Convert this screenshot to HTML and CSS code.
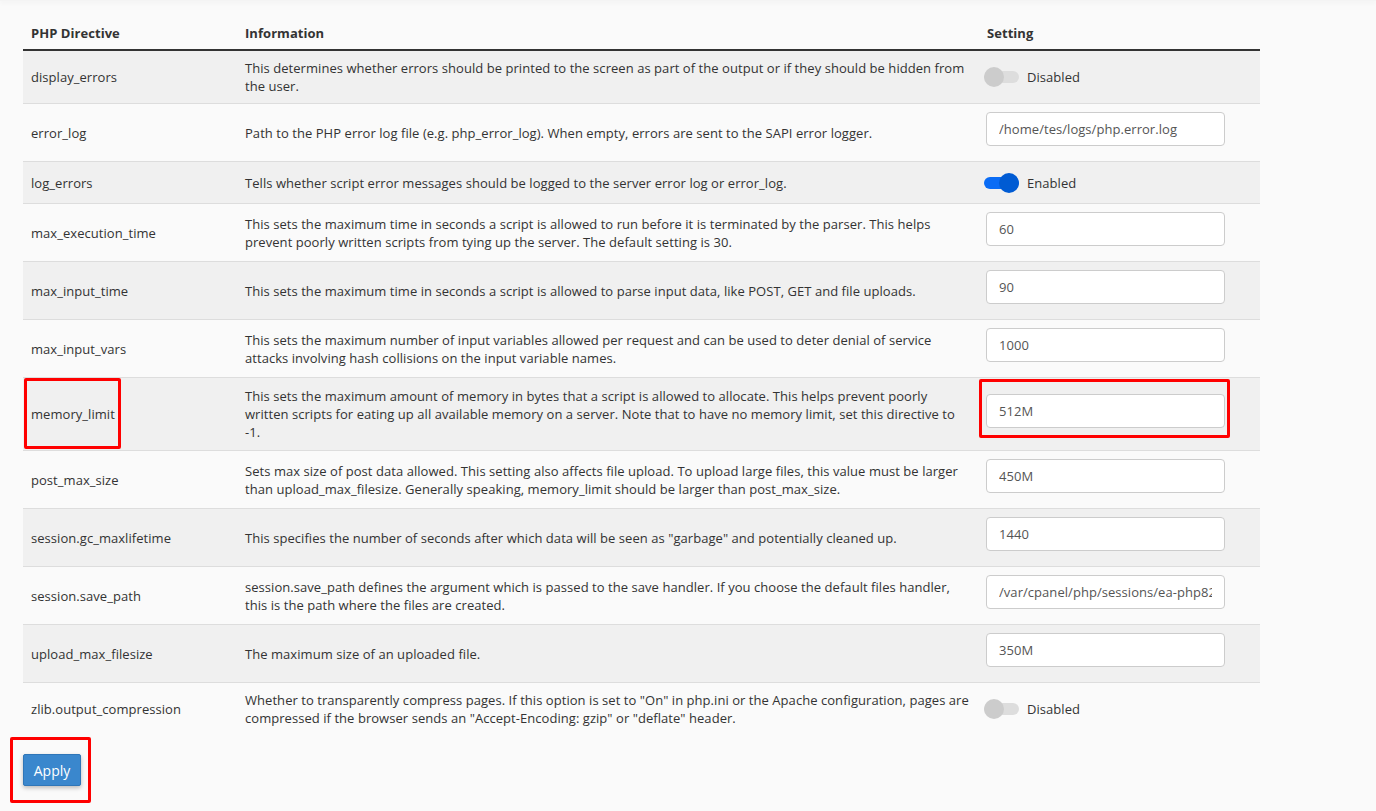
FILE: index.html
```html
<!DOCTYPE html>
<html>
<head>
<meta charset="UTF-8">
<title>MultiPHP INI Editor</title>
<link rel="stylesheet" href="styles.css">
</head>
<body>
<div class="top_shadow"></div>

<div class="editor">
    <table class="directives">
        <colgroup>
            <col class="col_name">
            <col class="col_info">
            <col class="col_setting">
        </colgroup>
        <thead>
            <tr>
                <th>PHP Directive</th>
                <th>Information</th>
                <th>Setting</th>
            </tr>
        </thead>
        <tbody>
            <tr>
                <td>display_errors</td>
                <td>This determines whether errors should be printed to the screen as part of the output or if they should be hidden from the user.</td>
                <td><span class="toggle"><span class="switch"></span><span class="label">Disabled</span></span></td>
            </tr>
            <tr>
                <td>error_log</td>
                <td>Path to the PHP error log file (e.g. php_error_log). When empty, errors are sent to the SAPI error logger.</td>
                <td><div class="field"><input type="text" value="/home/tes/logs/php.error.log"></div></td>
            </tr>
            <tr>
                <td>log_errors</td>
                <td>Tells whether script error messages should be logged to the server error log or error_log.</td>
                <td><span class="toggle on"><span class="switch"></span><span class="label">Enabled</span></span></td>
            </tr>
            <tr>
                <td>max_execution_time</td>
                <td>This sets the maximum time in seconds a script is allowed to run before it is terminated by the parser. This helps prevent poorly written scripts from tying up the server. The default setting is 30.</td>
                <td><div class="field"><input type="text" value="60"></div></td>
            </tr>
            <tr>
                <td>max_input_time</td>
                <td>This sets the maximum time in seconds a script is allowed to parse input data, like POST, GET and file uploads.</td>
                <td><div class="field"><input type="text" value="90"></div></td>
            </tr>
            <tr>
                <td>max_input_vars</td>
                <td>This sets the maximum number of input variables allowed per request and can be used to deter denial of service attacks involving hash collisions on the input variable names.</td>
                <td><div class="field"><input type="text" value="1000"></div></td>
            </tr>
            <tr class="tall">
                <td>memory_limit<span class="mark mark_name"></span></td>
                <td>This sets the maximum amount of memory in bytes that a script is allowed to allocate. This helps prevent poorly written scripts for eating up all available memory on a server. Note that to have no memory limit, set this directive to -1.</td>
                <td><div class="field"><input type="text" value="512M"><span class="mark mark_field"></span></div></td>
            </tr>
            <tr>
                <td>post_max_size</td>
                <td>Sets max size of post data allowed. This setting also affects file upload. To upload large files, this value must be larger than upload_max_filesize. Generally speaking, memory_limit should be larger than post_max_size.</td>
                <td><div class="field"><input type="text" value="450M"></div></td>
            </tr>
            <tr>
                <td>session.gc_maxlifetime</td>
                <td>This specifies the number of seconds after which data will be seen as "garbage" and potentially cleaned up.</td>
                <td><div class="field"><input type="text" value="1440"></div></td>
            </tr>
            <tr>
                <td>session.save_path</td>
                <td>session.save_path defines the argument which is passed to the save handler. If you choose the default files handler, this is the path where the files are created.</td>
                <td><div class="field"><input type="text" value="/var/cpanel/php/sessions/ea-php82"></div></td>
            </tr>
            <tr>
                <td>upload_max_filesize</td>
                <td>The maximum size of an uploaded file.</td>
                <td><div class="field"><input type="text" value="350M"></div></td>
            </tr>
            <tr>
                <td>zlib.output_compression</td>
                <td>Whether to transparently compress pages. If this option is set to "On" in php.ini or the Apache configuration, pages are compressed if the browser sends an "Accept-Encoding: gzip" or "deflate" header.</td>
                <td><span class="toggle"><span class="switch"></span><span class="label">Disabled</span></span></td>
            </tr>
        </tbody>
    </table>

    <div class="actions">
        <button class="apply">Apply</button>
        <span class="mark mark_apply"></span>
    </div>
</div>
</body>
</html>
```

FILE: styles.css
```css
body {
    font-family: "Open Sans", "DejaVu Sans", sans-serif;
    font-size: 13px;
    line-height: 18px;
    letter-spacing: 0.05px;
    margin: 0;
    color: #333;
    background: #fafafa;
}

* {
    box-sizing: border-box;
}

.top_shadow {
    height: 1px;
    background: #f4f4f4;
    box-shadow: 0 1px 5px rgba(0, 0, 0, 0.12);
}

.editor {
    width: 1237px;
    margin-left: 23px;
    padding: 15px 0 30px;
}

.directives {
    width: 100%;
    border-collapse: collapse;
    table-layout: fixed;
}

.directives .col_name {
    width: 214px;
}

.directives .col_info {
    width: 742px;
}

.directives .col_setting {
    width: 281px;
}

.directives th {
    text-align: left;
    font-weight: bold;
    padding: 8px 8px 7px;
    border-bottom: 2px solid #333;
}

.directives td {
    padding: 8px;
    vertical-align: middle;
    border-top: 1px solid #ddd;
}

.directives tr.tall td {
    padding: 9px 8px;
}

.directives tbody tr:first-child td {
    border-top: none;
}

.directives tbody tr:nth-child(odd) {
    background: #f0f0f0;
}

.directives td:first-child {
    position: relative;
}

.field {
    position: relative;
    margin-bottom: 7px;
}

.field input {
    display: block;
    width: 239px;
    height: 34px;
    margin-left: -1px;
    padding: 6px 12px;
    font-family: inherit;
    font-size: 13px;
    letter-spacing: 0.05px;
    color: #555;
    background: #fff;
    border: 1px solid #ccc;
    border-radius: 4px;
}

.toggle {
    display: inline-flex;
    align-items: center;
    height: 25px;
    vertical-align: middle;
}

.toggle .switch {
    position: relative;
    width: 35px;
    height: 12px;
    margin-left: -3px;
    margin-right: 8px;
    border-radius: 6px;
    background: #ddd;
}

.toggle .switch:after {
    content: ' ';
    position: absolute;
    top: -4px;
    left: 0;
    width: 20px;
    height: 20px;
    border-radius: 50%;
    background: #ccc;
}

.toggle.on .switch {
    background: #0a6cf5;
}

.toggle.on .switch:after {
    left: auto;
    right: 0;
    background: #005bd3;
}

.actions {
    position: relative;
    padding-top: 19px;
}

.apply {
    font-family: inherit;
    font-size: 14px;
    color: #fff;
    background: #3a87cd;
    border: 1px solid #2f76b8;
    border-radius: 2px;
    width: 58px;
    height: 32px;
    padding: 0;
    box-shadow: 0 2px 4px rgba(0, 0, 0, 0.25);
}

.mark {
    position: absolute;
    border: 3px solid #f00;
    border-radius: 2px;
    pointer-events: none;
}

.mark_name {
    left: 1px;
    top: 0;
    width: 97px;
    height: 71px;
}

.mark_field {
    left: -8px;
    top: -15px;
    width: 251px;
    height: 59px;
}

.mark_apply {
    left: -13px;
    top: 2px;
    width: 81px;
    height: 66px;
}
```
